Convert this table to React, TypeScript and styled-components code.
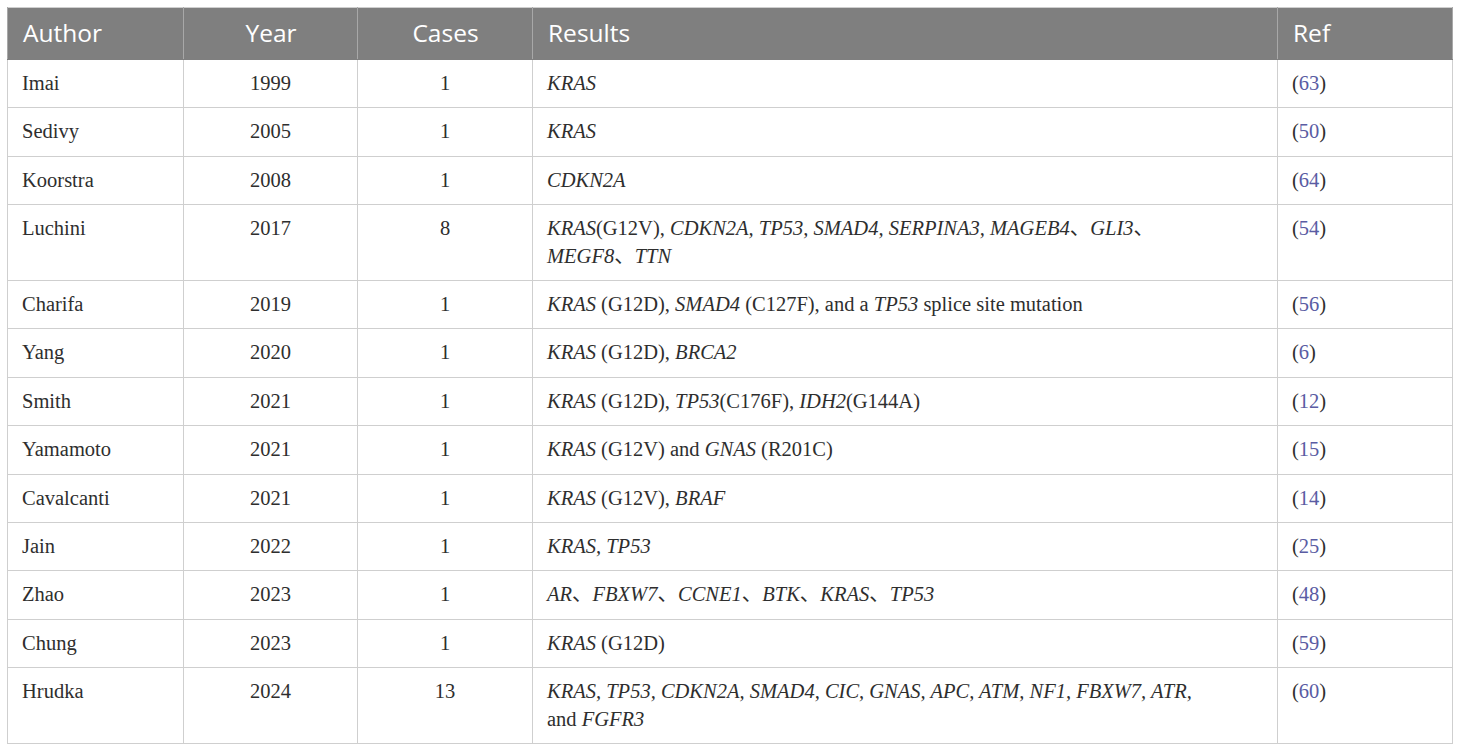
import React from "react";
import styled, { createGlobalStyle } from "styled-components";

const Global = createGlobalStyle`
  html, body { margin: 0; padding: 0; background: #ffffff; }
  body { font-family: "Liberation Serif", "Times New Roman", serif; }
`;

const Wrap = styled.div`
  padding: 7px 8px 7px 7px;
`;

const Table = styled.table`
  width: 1445px;
  border-collapse: collapse;
  table-layout: fixed;
  border: 1px solid #cfcfcf;
`;

const HeadCell = styled.th<{ $center?: boolean }>`
  background: #7f7f7f;
  color: #ffffff;
  font-family: "Open Sans", "Noto Sans", sans-serif;
  font-weight: 400;
  font-size: 24.5px;
  line-height: 32px;
  padding: 9px 14px 10px 15px;
  text-align: ${(p) => (p.$center ? "center" : "left")};
  border: 1px solid #a8a8a8;
  border-top: none;
  border-bottom: 1px solid #7f7f7f;
`;

const Cell = styled.td<{ $center?: boolean; $wide?: boolean }>`
  font-family: "Liberation Serif", "Noto Sans CJK SC", serif;
  font-size: 20.5px;
  line-height: 27.4px;
  color: #2e2e2e;
  padding: 10px ${(p) => (p.$wide ? "76px" : "14px")} 10px 14px;
  text-align: ${(p) => (p.$center ? "center" : "left")};
  vertical-align: top;
  border: 1px solid #cfcfcf;
`;

const Gene = styled.i`
  font-style: italic;
`;

const RefLink = styled.span`
  color: #5a5ca3;
`;

type Row = {
  author: string;
  year: string;
  cases: string;
  results: React.ReactNode;
  ref: string;
};

const rows: Row[] = [
  { author: "Imai", year: "1999", cases: "1", results: <Gene>KRAS</Gene>, ref: "63" },
  { author: "Sedivy", year: "2005", cases: "1", results: <Gene>KRAS</Gene>, ref: "50" },
  { author: "Koorstra", year: "2008", cases: "1", results: <Gene>CDKN2A</Gene>, ref: "64" },
  {
    author: "Luchini",
    year: "2017",
    cases: "8",
    results: (
      <>
        <Gene>KRAS</Gene>(G12V), <Gene>CDKN2A, TP53, SMAD4, SERPINA3, MAGEB4</Gene>、<Gene>GLI3</Gene>、
        <Gene>MEGF8</Gene>、<Gene>TTN</Gene>
      </>
    ),
    ref: "54",
  },
  {
    author: "Charifa",
    year: "2019",
    cases: "1",
    results: (
      <>
        <Gene>KRAS</Gene> (G12D), <Gene>SMAD4</Gene> (C127F), and a <Gene>TP53</Gene> splice site mutation
      </>
    ),
    ref: "56",
  },
  {
    author: "Yang",
    year: "2020",
    cases: "1",
    results: (
      <>
        <Gene>KRAS</Gene> (G12D), <Gene>BRCA2</Gene>
      </>
    ),
    ref: "6",
  },
  {
    author: "Smith",
    year: "2021",
    cases: "1",
    results: (
      <>
        <Gene>KRAS</Gene> (G12D), <Gene>TP53</Gene>(C176F), <Gene>IDH2</Gene>(G144A)
      </>
    ),
    ref: "12",
  },
  {
    author: "Yamamoto",
    year: "2021",
    cases: "1",
    results: (
      <>
        <Gene>KRAS</Gene> (G12V) and <Gene>GNAS</Gene> (R201C)
      </>
    ),
    ref: "15",
  },
  {
    author: "Cavalcanti",
    year: "2021",
    cases: "1",
    results: (
      <>
        <Gene>KRAS</Gene> (G12V), <Gene>BRAF</Gene>
      </>
    ),
    ref: "14",
  },
  { author: "Jain", year: "2022", cases: "1", results: <Gene>KRAS, TP53</Gene>, ref: "25" },
  {
    author: "Zhao",
    year: "2023",
    cases: "1",
    results: (
      <>
        <Gene>AR</Gene>、<Gene>FBXW7</Gene>、<Gene>CCNE1</Gene>、<Gene>BTK</Gene>、<Gene>KRAS</Gene>、<Gene>TP53</Gene>
      </>
    ),
    ref: "48",
  },
  {
    author: "Chung",
    year: "2023",
    cases: "1",
    results: (
      <>
        <Gene>KRAS</Gene> (G12D)
      </>
    ),
    ref: "59",
  },
  {
    author: "Hrudka",
    year: "2024",
    cases: "13",
    results: (
      <>
        <Gene>KRAS, TP53, CDKN2A, SMAD4, CIC, GNAS, APC, ATM, NF1, FBXW7, ATR,</Gene> and <Gene>FGFR3</Gene>
      </>
    ),
    ref: "60",
  },
];

export default function App() {
  return (
    <>
      <Global />
      <Wrap>
        <Table>
          <colgroup>
            <col style={{ width: 176 }} />
            <col style={{ width: 174 }} />
            <col style={{ width: 175 }} />
            <col style={{ width: 745 }} />
            <col style={{ width: 175 }} />
          </colgroup>
          <thead>
            <tr>
              <HeadCell>Author</HeadCell>
              <HeadCell $center>Year</HeadCell>
              <HeadCell $center>Cases</HeadCell>
              <HeadCell>Results</HeadCell>
              <HeadCell>Ref</HeadCell>
            </tr>
          </thead>
          <tbody>
            {rows.map((r) => (
              <tr key={r.author}>
                <Cell>{r.author}</Cell>
                <Cell $center>{r.year}</Cell>
                <Cell $center>{r.cases}</Cell>
                <Cell $wide>{r.results}</Cell>
                <Cell>
                  (<RefLink>{r.ref}</RefLink>)
                </Cell>
              </tr>
            ))}
          </tbody>
        </Table>
      </Wrap>
    </>
  );
}
